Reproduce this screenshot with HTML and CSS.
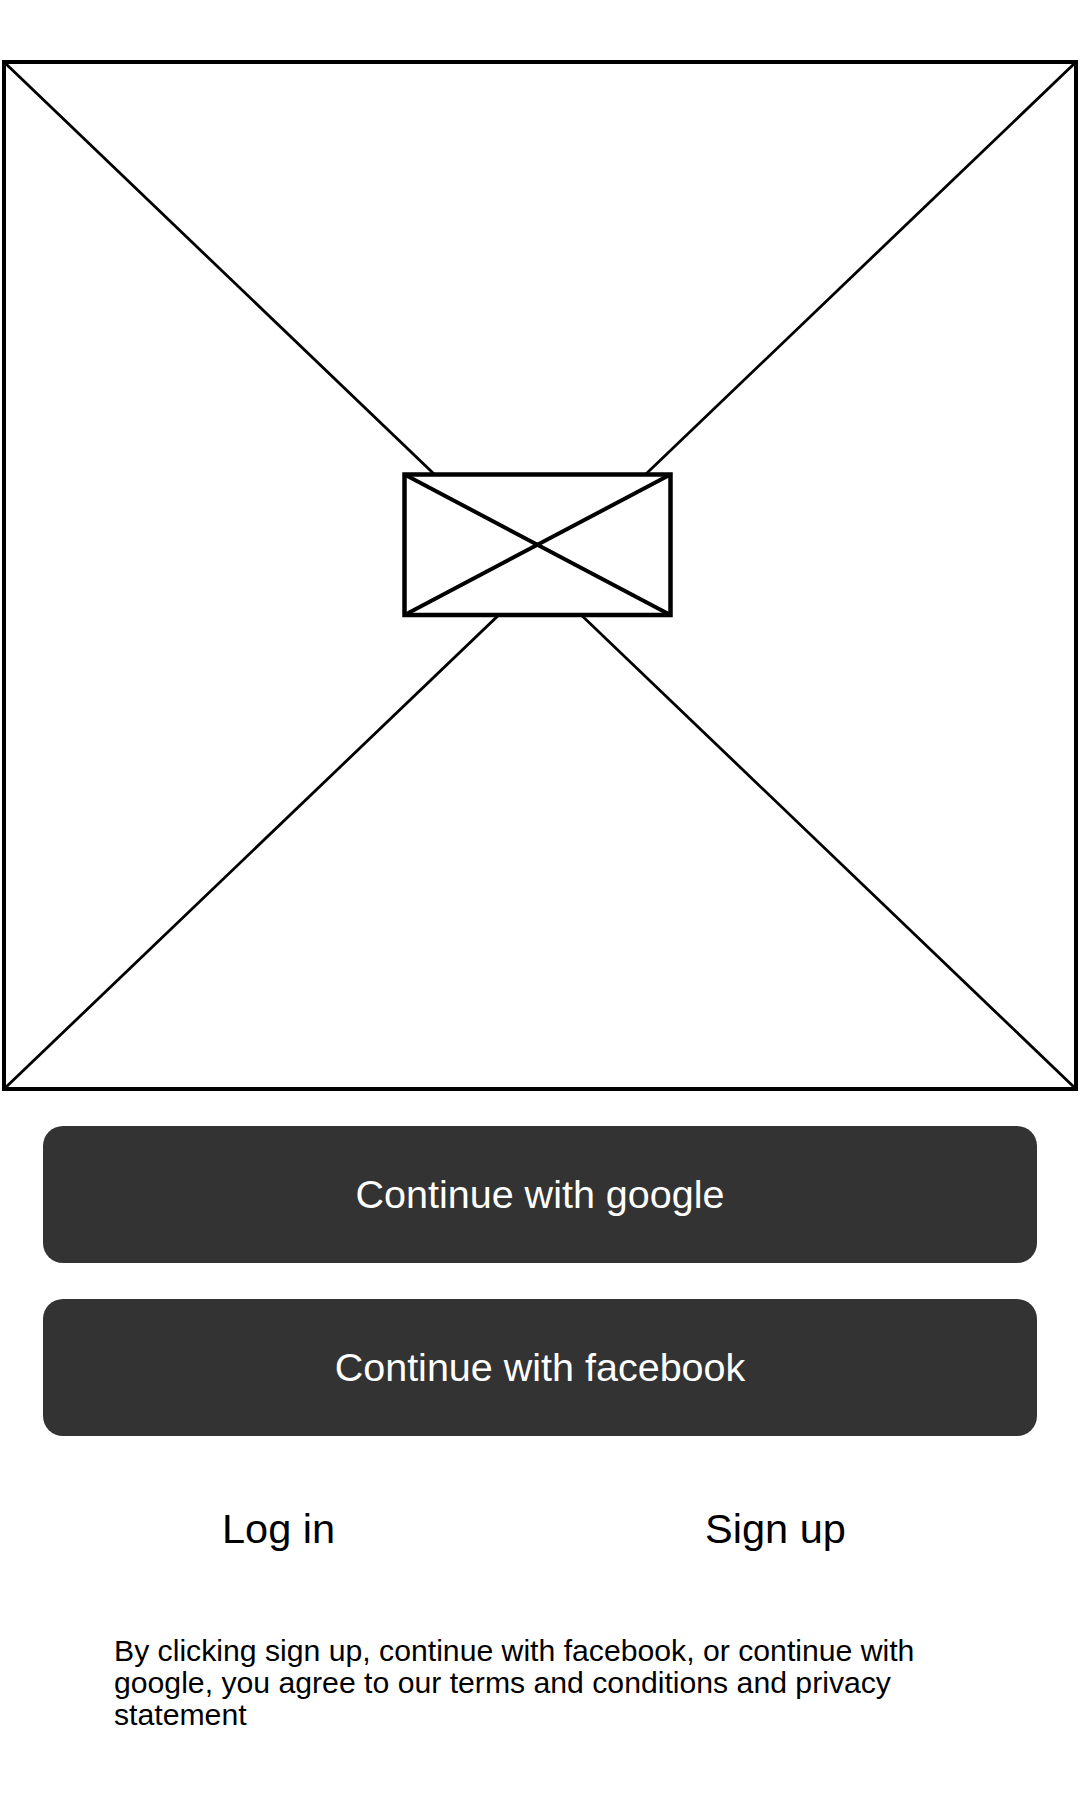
FILE: index.html
```html
<!DOCTYPE html>
<html>
    <head>
        <meta name="viewport" content="width=device-width, initial-scale=1.0">
        <meta charset="utf-8" />
        <title>Welcome</title>
        <link rel="stylesheet" href="styles.css">
    </head>
    <body>

        <div class="hero">
            <svg class="heroimg" width="1080" height="1096" viewBox="0 0 1080 1096">
                <!-- outer placeholder -->
                <line x1="4" y1="62" x2="1076" y2="1089" class="diag"/>
                <line x1="1076" y1="62" x2="4" y2="1089" class="diag"/>
                <rect x="4" y="62" width="1072" height="1027" class="frame"/>
                <!-- logo placeholder -->
                <rect x="404.5" y="474.5" width="266" height="140.5" class="logo"/>
                <line x1="404.5" y1="474.5" x2="670.5" y2="615" class="logodiag"/>
                <line x1="670.5" y1="474.5" x2="404.5" y2="615" class="logodiag"/>
            </svg>
        </div>

        <div class="actions">
            <button class="bigbtn">Continue with google</button>
            <button class="bigbtn">Continue with facebook</button>
        </div>

        <div class="links">
            <a class="link">Log in</a>
            <a class="link">Sign up</a>
        </div>

        <p class="terms">By clicking sign up, continue with facebook, or continue with google, you agree to our terms and conditions and privacy statement</p>

    </body>
</html>
```

FILE: styles.css
```css
*
{
    box-sizing: border-box;
}

body
{
    font-family: "Liberation Sans", Arial, sans-serif;
    margin: 0px;
    width: 1080px;
    background: #ffffff;
    color: #000000;
}

.hero
{
    height: 1096px;
}

.heroimg
{
    display: block;
}

.diag
{
    stroke: #000000;
    stroke-width: 2.8;
}

.frame
{
    fill: none;
    stroke: #000000;
    stroke-width: 4;
}

.logo
{
    fill: #ffffff;
    stroke: #000000;
    stroke-width: 4.5;
}

.logodiag
{
    stroke: #000000;
    stroke-width: 4;
}

.actions
{
    display: flex;
    flex-direction: column;
    gap: 36px;
    padding: 30px 43px 0 43px;
}

.bigbtn
{
    height: 137px;
    border: none;
    border-radius: 20px;
    background: #333333;
    color: #ffffff;
    font-family: "Liberation Sans", Arial, sans-serif;
    font-size: 39.5px;
    padding: 0;
}

.links
{
    display: flex;
    gap: 370px;
    padding: 70px 0 0 222px;
}

.link
{
    font-size: 41.5px;
    line-height: 46px;
}

.terms
{
    width: 860px;
    margin: 83px 0 0 114px;
    font-size: 30.2px;
    line-height: 32px;
}
```
